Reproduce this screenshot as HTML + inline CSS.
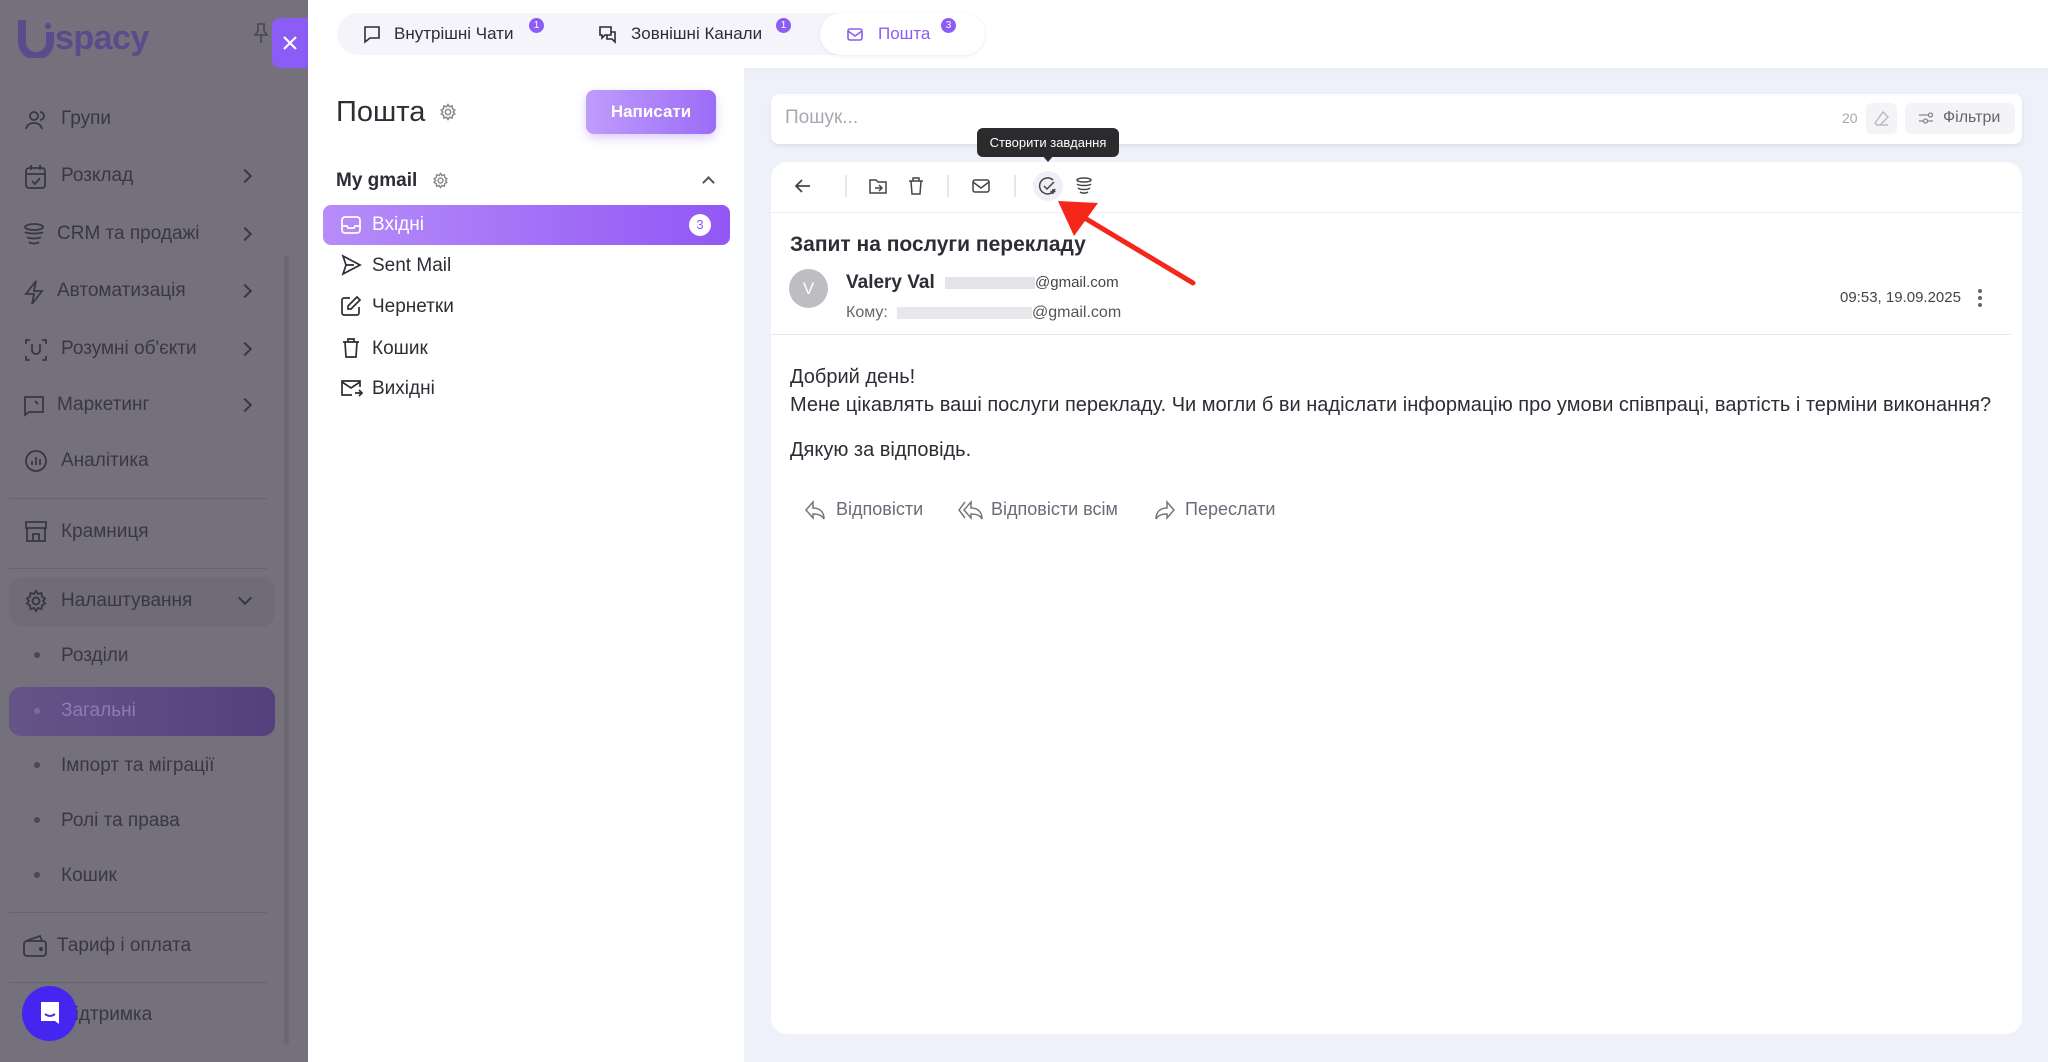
<!DOCTYPE html>
<html><head><meta charset="utf-8"><style>
*{box-sizing:border-box;margin:0;padding:0}
body{width:2048px;height:1062px;overflow:hidden;font-family:"Liberation Sans","DejaVu Sans",sans-serif;background:#eef0fa;position:relative;color:#2b2b33}
.abs{position:absolute}
.sb{left:0;top:0;width:308px;height:1062px;background:#74707c}
.sb .it{position:absolute;left:61px;font-size:19px;color:#3a3744;white-space:nowrap;line-height:22px}
.sb svg{position:absolute}
.chev{position:absolute;left:240px;width:10px;height:10px;border-right:2px solid #3a3744;border-top:2px solid #3a3744;transform:rotate(45deg)}
.dot{position:absolute;left:34px;width:6px;height:6px;border-radius:3px;background:#4a4754}
.sep{position:absolute;left:9px;width:258px;height:1px;background:#67636f}
.top{left:308px;top:0;width:1740px;height:68px;background:#fff;box-shadow:0 2px 6px rgba(0,0,0,.04)}
.tabs{left:337px;top:13px;width:648px;height:42px;border-radius:21px;background:#f5f4fb}
.tab{position:absolute;top:24px;font-size:17px;color:#2d2d35;white-space:nowrap}
.badge{position:absolute;width:15px;height:15px;border-radius:8px;background:#8b5cf6;color:#fff;font-size:10px;text-align:center;line-height:15px}
.mp{left:308px;top:68px;width:436px;height:994px;background:#fff}
.fi{position:absolute;left:372px;font-size:19px;color:#2d2d35}
.card{left:771px;top:162px;width:1251px;height:872px;background:#fff;border-radius:16px}
.tb svg{position:absolute;top:176px}
.vd{position:absolute;top:175px;width:2px;height:22px;background:#e6e6ee}
.act{position:absolute;top:499px;font-size:18px;color:#6b6b78}
</style></head><body>
<div class="abs sb">
 <svg style="left:18px;top:18px" width="36" height="40" viewBox="0 0 36 40"><path d="M4 2 V24 a14 14 0 0 0 28 0 V14" stroke="#5b4a8c" stroke-width="8" fill="none"/><circle cx="30" cy="8" r="3" fill="#5b4a8c"/></svg>
 <div class="abs" style="left:55px;top:19px;font-size:34px;font-weight:bold;color:#5b4a8c;letter-spacing:-0.5px">spacy</div>
 <svg style="left:252px;top:22px" width="18" height="22" viewBox="0 0 18 22"><path d="M5 2h8M6 2v7l-3 4h12l-3-4V2M9 13v8" stroke="#4a4754" stroke-width="1.6" fill="none"/></svg>
 <svg style="left:24px;top:108px" width="24" height="24" viewBox="0 0 24 24" fill="none" stroke="#3a3744" stroke-width="1.8"><circle cx="10" cy="8" r="4"/><path d="M2 21c1-4 4-6 8-6s7 2 8 6M16 4a4 4 0 0 1 0 8"/></svg>
 <div class="it" style="top:108px">Групи</div>
 <svg style="left:24px;top:164px" width="24" height="26" viewBox="0 0 24 26" fill="none" stroke="#3a3744" stroke-width="1.8"><rect x="2" y="4" width="19" height="20" rx="3"/><path d="M2 10h19M7 1v5M16 1v5M8 17l3 3 5-6"/></svg>
 <div class="it" style="top:165px">Розклад</div><div class="chev" style="top:171px"></div>
 <svg style="left:22px;top:222px" width="24" height="26" viewBox="0 0 24 26" fill="none" stroke="#3a3744" stroke-width="1.8"><ellipse cx="12" cy="5" rx="9" ry="3"/><path d="M3 10c2 2 16 2 18 0M5 15c2 2 12 2 14 0M7 20c2 2 8 2 10 0"/></svg>
 <div class="it" style="left:57px;top:223px">CRM та продажі</div><div class="chev" style="top:229px"></div>
 <svg style="left:22px;top:279px" width="24" height="26" viewBox="0 0 24 26" fill="none" stroke="#3a3744" stroke-width="1.8"><path d="M14 2L4 15h8l-2 10 10-13h-8z"/></svg>
 <div class="it" style="left:57px;top:280px">Автоматизація</div><div class="chev" style="top:286px"></div>
 <svg style="left:24px;top:337px" width="24" height="26" viewBox="0 0 24 26" fill="none" stroke="#3a3744" stroke-width="1.8"><path d="M2 7V3h4M18 3h4v4M2 19v4h4M22 19v4h-4M8 7v6a4 4 0 0 0 8 0V7"/></svg>
 <div class="it" style="top:338px">Розумні об'єкти</div><div class="chev" style="top:344px"></div>
 <svg style="left:22px;top:393px" width="24" height="26" viewBox="0 0 24 26" fill="none" stroke="#3a3744" stroke-width="1.8"><path d="M3 4v18l4-3h14V4H3zM13 8l3 3"/></svg>
 <div class="it" style="left:57px;top:394px">Маркетинг</div><div class="chev" style="top:400px"></div>
 <svg style="left:24px;top:449px" width="24" height="24" viewBox="0 0 24 24" fill="none" stroke="#3a3744" stroke-width="1.8"><circle cx="12" cy="12" r="10"/><path d="M8 16v-4M12 16V8M16 16v-6"/></svg>
 <div class="it" style="top:450px">Аналітика</div>
 <div class="sep" style="top:498px"></div>
 <svg style="left:24px;top:519px" width="24" height="24" viewBox="0 0 24 24" fill="none" stroke="#3a3744" stroke-width="1.8"><path d="M3 9V22h18V9M2 3h20v6H2zM9 22v-7h6v7"/></svg>
 <div class="it" style="top:521px">Крамниця</div>
 <div class="sep" style="top:568px"></div>
 <div class="abs" style="left:9px;top:577px;width:266px;height:50px;border-radius:14px;background:#6f6b78"></div>
 <svg style="left:24px;top:589px" width="24" height="24" viewBox="0 0 24 24" fill="none" stroke="#3a3744" stroke-width="1.9"><circle cx="12" cy="12" r="3.5"/><path d="M12 2l2 3 3.5-1 .5 3.5 3 2-2 2.5 2 2.5-3 2-.5 3.5-3.5-1-2 3-2-3-3.5 1-.5-3.5-3-2 2-2.5-2-2.5 3-2 .5-3.5 3.5 1z"/></svg>
 <div class="it" style="top:590px">Налаштування</div>
 <div class="abs" style="left:240px;top:593px;width:10px;height:10px;border-right:2px solid #3a3744;border-bottom:2px solid #3a3744;transform:rotate(45deg)"></div>
 <div class="dot" style="top:652px"></div><div class="it" style="top:645px">Розділи</div>
 <div class="abs" style="left:9px;top:687px;width:266px;height:49px;border-radius:12px;background:linear-gradient(90deg,#655487,#55407e)"></div>
 <div class="dot" style="top:708px;background:#7d6aa6"></div><div class="it" style="top:700px;color:#8d7bb8">Загальні</div>
 <div class="dot" style="top:762px"></div><div class="it" style="top:755px">Імпорт та міграції</div>
 <div class="dot" style="top:817px"></div><div class="it" style="top:810px">Ролі та права</div>
 <div class="dot" style="top:872px"></div><div class="it" style="top:865px">Кошик</div>
 <div class="sep" style="top:912px"></div>
 <svg style="left:22px;top:934px" width="26" height="24" viewBox="0 0 26 24" fill="none" stroke="#3a3744" stroke-width="1.8"><rect x="2" y="7" width="22" height="15" rx="3"/><path d="M4 7L18 2l2 5"/><circle cx="19" cy="15" r="1.2" fill="#3a3744"/></svg>
 <div class="it" style="left:57px;top:935px">Тариф і оплата</div>
 <div class="sep" style="top:982px"></div>
 <div class="it" style="top:1004px">Підтримка</div>
 <div class="abs" style="left:22px;top:986px;width:55px;height:55px;border-radius:28px;background:#4526f0"></div>
 <svg style="left:38px;top:1000px" width="24" height="26" viewBox="0 0 24 26"><path d="M3 2h18v22l-4-3H3z" fill="#fff"/><path d="M7 14q5 4 10 0" stroke="#4526f0" stroke-width="1.8" fill="none"/></svg>
 <div class="abs" style="left:284px;top:255px;width:5px;height:790px;background:#6b6874;border-radius:3px"></div>
</div>
<div class="abs" style="left:272px;top:18px;width:36px;height:50px;background:#8b5cf6;border-radius:8px 0 0 8px"></div>
<svg class="abs" style="left:281px;top:34px" width="18" height="18" viewBox="0 0 18 18"><path d="M3 3l12 12M15 3L3 15" stroke="#fff" stroke-width="2.2"/></svg>

<div class="abs top"></div>
<div class="abs tabs"></div>
<div class="abs" style="left:820px;top:13px;width:165px;height:42px;border-radius:21px;background:#fff;box-shadow:0 1px 4px rgba(0,0,0,.08)"></div>
<svg class="abs" style="left:362px;top:24px" width="20" height="20" viewBox="0 0 20 20" fill="none" stroke="#2d2d35" stroke-width="1.6"><path d="M3 3h14v11H8l-5 4z"/></svg>
<div class="tab" style="left:394px">Внутрішні Чати</div><div class="badge" style="left:529px;top:18px">1</div>
<svg class="abs" style="left:598px;top:24px" width="20" height="20" viewBox="0 0 20 20" fill="none" stroke="#2d2d35" stroke-width="1.6"><path d="M2 3h11v8H7l-3 3v-3H2zM9 11v4h5l3 3V8h-4"/></svg>
<div class="tab" style="left:631px">Зовнішні Канали</div><div class="badge" style="left:776px;top:18px">1</div>
<svg class="abs" style="left:846px;top:25px" width="18" height="18" viewBox="0 0 18 18" fill="none" stroke="#8b5cf6" stroke-width="1.6"><rect x="2" y="4" width="14" height="11" rx="2"/><path d="M2 6l7 5 7-5"/></svg>
<div class="tab" style="left:878px;color:#8b5cf6">Пошта</div><div class="badge" style="left:941px;top:18px">3</div>

<div class="abs mp"></div>
<div class="abs" style="left:336px;top:96px;font-size:29px;color:#2d2d35">Пошта</div>
<svg class="abs" style="left:439px;top:103px" width="18" height="18" viewBox="0 0 24 24" fill="none" stroke="#888" stroke-width="2"><circle cx="12" cy="12" r="3.5"/><path d="M12 2l2 3 3.5-1 .5 3.5 3 2-2 2.5 2 2.5-3 2-.5 3.5-3.5-1-2 3-2-3-3.5 1-.5-3.5-3-2 2-2.5-2-2.5 3-2 .5-3.5 3.5 1z"/></svg>
<div class="abs" style="left:586px;top:90px;width:130px;height:44px;border-radius:8px;background:linear-gradient(90deg,#c09cfa,#9b6cf7);box-shadow:0 4px 10px rgba(139,92,246,.3);color:#fff;font-size:17px;font-weight:bold;text-align:center;line-height:44px">Написати</div>
<div class="abs" style="left:336px;top:170px;font-size:19px;font-weight:bold;color:#2d2d35">My gmail</div>
<svg class="abs" style="left:432px;top:172px" width="17" height="17" viewBox="0 0 24 24" fill="none" stroke="#888" stroke-width="2"><circle cx="12" cy="12" r="3.5"/><path d="M12 2l2 3 3.5-1 .5 3.5 3 2-2 2.5 2 2.5-3 2-.5 3.5-3.5-1-2 3-2-3-3.5 1-.5-3.5-3-2 2-2.5-2-2.5 3-2 .5-3.5 3.5 1z"/></svg>
<div class="abs" style="left:704px;top:178px;width:9px;height:9px;border-left:2px solid #555;border-top:2px solid #555;transform:rotate(45deg)"></div>
<div class="abs" style="left:323px;top:205px;width:407px;height:40px;border-radius:8px;background:linear-gradient(90deg,#b68df9,#9257f5)"></div>
<svg class="abs" style="left:340px;top:214px" width="22" height="22" viewBox="0 0 22 22" fill="none" stroke="#fff" stroke-width="1.7"><rect x="2" y="3" width="18" height="16" rx="3"/><path d="M2 12h5l1 2h6l1-2h5"/></svg>
<div class="fi" style="top:214px;color:#fff">Вхідні</div>
<div class="abs" style="left:689px;top:214px;width:22px;height:22px;border-radius:11px;background:#fff;color:#8b5cf6;font-size:13px;text-align:center;line-height:22px">3</div>
<svg class="abs" style="left:340px;top:254px" width="22" height="22" viewBox="0 0 22 22" fill="none" stroke="#2d2d35" stroke-width="1.7"><path d="M3 2l17 9-17 9 3-9zM6 11h8"/></svg>
<div class="fi" style="top:255px">Sent Mail</div>
<svg class="abs" style="left:340px;top:295px" width="22" height="22" viewBox="0 0 22 22" fill="none" stroke="#2d2d35" stroke-width="1.7"><path d="M10 3H4a2 2 0 0 0-2 2v13a2 2 0 0 0 2 2h13a2 2 0 0 0 2-2v-6M17 2l3 3-9 9H8v-3z"/></svg>
<div class="fi" style="top:296px">Чернетки</div>
<svg class="abs" style="left:340px;top:337px" width="22" height="22" viewBox="0 0 22 22" fill="none" stroke="#2d2d35" stroke-width="1.7"><path d="M3 5h16M8 5V2h6v3M5 5l1 15h10l1-15"/></svg>
<div class="fi" style="top:338px">Кошик</div>
<svg class="abs" style="left:340px;top:377px" width="24" height="22" viewBox="0 0 24 22" fill="none" stroke="#2d2d35" stroke-width="1.7"><path d="M20 10V4H2v14h10M2 5l9 6 9-6M15 16h7M19 13l3 3-3 3"/></svg>
<div class="fi" style="top:378px">Вихідні</div>

<div class="abs" style="left:771px;top:94px;width:1251px;height:50px;background:#fff;border-radius:8px;box-shadow:0 2px 5px rgba(0,0,0,.08)"></div>
<div class="abs" style="left:785px;top:107px;font-size:19px;color:#a8a8b0">Пошук...</div>
<div class="abs" style="left:1842px;top:110px;font-size:14px;color:#aaa">20</div>
<div class="abs" style="left:1866px;top:103px;width:31px;height:31px;border-radius:6px;background:#f4f3f8"></div>
<svg class="abs" style="left:1873px;top:110px" width="17" height="17" viewBox="0 0 17 17" fill="none" stroke="#bbb" stroke-width="1.4"><path d="M10 2l5 5-8 8H4l-2-2zM3 15h12"/></svg>
<div class="abs" style="left:1905px;top:103px;width:110px;height:31px;border-radius:6px;background:#f4f3f8"></div>
<svg class="abs" style="left:1918px;top:111px" width="16" height="14" viewBox="0 0 16 14" fill="none" stroke="#888" stroke-width="1.3"><path d="M1 4h9M1 10h4M10 10h5"/><circle cx="12.5" cy="4" r="2"/><circle cx="7.5" cy="10" r="2"/></svg>
<div class="abs" style="left:1943px;top:109px;font-size:16px;color:#666">Фільтри</div>

<div class="abs card"></div>
<div class="tb">
<svg style="left:793px" width="20" height="20" viewBox="0 0 20 20" fill="none" stroke="#444" stroke-width="1.8"><path d="M17 10H3M9 4l-6 6 6 6"/></svg>
<div class="vd" style="left:845px"></div>
<svg style="left:868px" width="20" height="20" viewBox="0 0 20 20" fill="none" stroke="#444" stroke-width="1.5"><path d="M2 4h6l2 2h8v11H2zM7 12h7M11 9l3 3-3 3"/></svg>
<svg style="left:906px" width="20" height="20" viewBox="0 0 20 20" fill="none" stroke="#444" stroke-width="1.5"><path d="M3 5h14M7 5V2h6v3M5 5l1 13h8l1-13"/></svg>
<div class="vd" style="left:947px"></div>
<svg style="left:971px" width="20" height="20" viewBox="0 0 20 20" fill="none" stroke="#444" stroke-width="1.5"><rect x="2" y="4" width="16" height="12" rx="2"/><path d="M2 6l8 6 8-6"/></svg>
<div class="vd" style="left:1014px"></div>
</div>
<div class="abs" style="left:1033px;top:171px;width:30px;height:30px;border-radius:15px;background:#f0eff6"></div>
<svg class="abs" style="left:1038px;top:176px" width="20" height="20" viewBox="0 0 20 20" fill="none" stroke="#444" stroke-width="1.5"><path d="M15 4a8 8 0 1 0 2 9M6 10l3 3 7-7M15 13v5M12.5 15.5h5"/></svg>
<svg class="abs" style="left:1074px;top:176px" width="20" height="20" viewBox="0 0 20 20" fill="none" stroke="#444" stroke-width="1.5"><ellipse cx="10" cy="4" rx="7" ry="2"/><path d="M3 8c2 2 12 2 14 0M4 12c2 2 10 2 12 0M6 16c2 1.5 6 1.5 8 0"/></svg>
<div class="abs" style="left:771px;top:212px;width:1251px;height:1px;background:#f0f0f4"></div>
<div class="abs" style="left:977px;top:128px;width:142px;height:29px;border-radius:6px;background:#2b2b2e;color:#fff;font-size:13px;text-align:center;line-height:29px">Створити завдання</div>
<div class="abs" style="left:1042px;top:155px;width:0;height:0;border-left:6px solid transparent;border-right:6px solid transparent;border-top:7px solid #2b2b2e"></div>

<div class="abs" style="left:790px;top:233px;font-size:21px;font-weight:bold;color:#2d2d35">Запит на послуги перекладу</div>
<div class="abs" style="left:789px;top:269px;width:39px;height:39px;border-radius:20px;background:#bdbdc2;color:#fff;font-size:17px;text-align:center;line-height:39px">V</div>
<div class="abs" style="left:846px;top:272px;font-size:19px;font-weight:bold;color:#2d2d35">Valery Val</div>
<div class="abs" style="left:945px;top:277px;width:90px;height:12px;background:#e4e4e8"></div>
<div class="abs" style="left:1035px;top:274px;font-size:15px;color:#444">@gmail.com</div>
<div class="abs" style="left:846px;top:304px;font-size:16px;color:#666">Кому:</div>
<div class="abs" style="left:897px;top:307px;width:135px;height:12px;background:#e8e8ec"></div>
<div class="abs" style="left:1032px;top:304px;font-size:16px;color:#555">@gmail.com</div>
<div class="abs" style="left:1840px;top:289px;font-size:15px;color:#444">09:53, 19.09.2025</div>
<svg class="abs" style="left:1976px;top:287px" width="8" height="22" viewBox="0 0 8 22" fill="#666"><circle cx="4" cy="4" r="2"/><circle cx="4" cy="11" r="2"/><circle cx="4" cy="18" r="2"/></svg>
<div class="abs" style="left:771px;top:334px;width:1240px;height:1px;background:#e8e8f0"></div>

<div class="abs" style="left:790px;top:363px;font-size:20px;color:#2d2d35;line-height:28px">Добрий день!<br>Мене цікавлять ваші послуги перекладу. Чи могли б ви надіслати інформацію про умови співпраці, вартість і терміни виконання?</div>
<div class="abs" style="left:790px;top:439px;font-size:20px;color:#2d2d35">Дякую за відповідь.</div>

<svg class="abs" style="left:804px;top:499px" width="22" height="22" viewBox="0 0 22 22" fill="none" stroke="#777" stroke-width="1.5"><path d="M9 3L2 11l7 8v-4c5 0 9 1 11 5 0-7-4-11-11-11z"/></svg>
<div class="act" style="left:836px">Відповісти</div>
<svg class="abs" style="left:958px;top:499px" width="26" height="22" viewBox="0 0 26 22" fill="none" stroke="#777" stroke-width="1.5"><path d="M7 3L1 11l6 8M13 3L6 11l7 8v-4c5 0 9 1 11 5 0-7-4-11-11-11z"/></svg>
<div class="act" style="left:991px">Відповісти всім</div>
<svg class="abs" style="left:1154px;top:499px" width="22" height="22" viewBox="0 0 22 22" fill="none" stroke="#777" stroke-width="1.5"><path d="M13 3l7 8-7 8v-4c-5 0-9 1-11 5 0-7 4-11 11-11z"/></svg>
<div class="act" style="left:1185px">Переслати</div>

<svg class="abs" style="left:1040px;top:190px" width="170" height="110" viewBox="1040 190 170 110"><path d="M1193 283 L1078 214" stroke="#f5271a" stroke-width="5" stroke-linecap="round"/><path d="M1058 201 L1098 203 L1074 236 Z" fill="#f5271a"/></svg>
</body></html>
